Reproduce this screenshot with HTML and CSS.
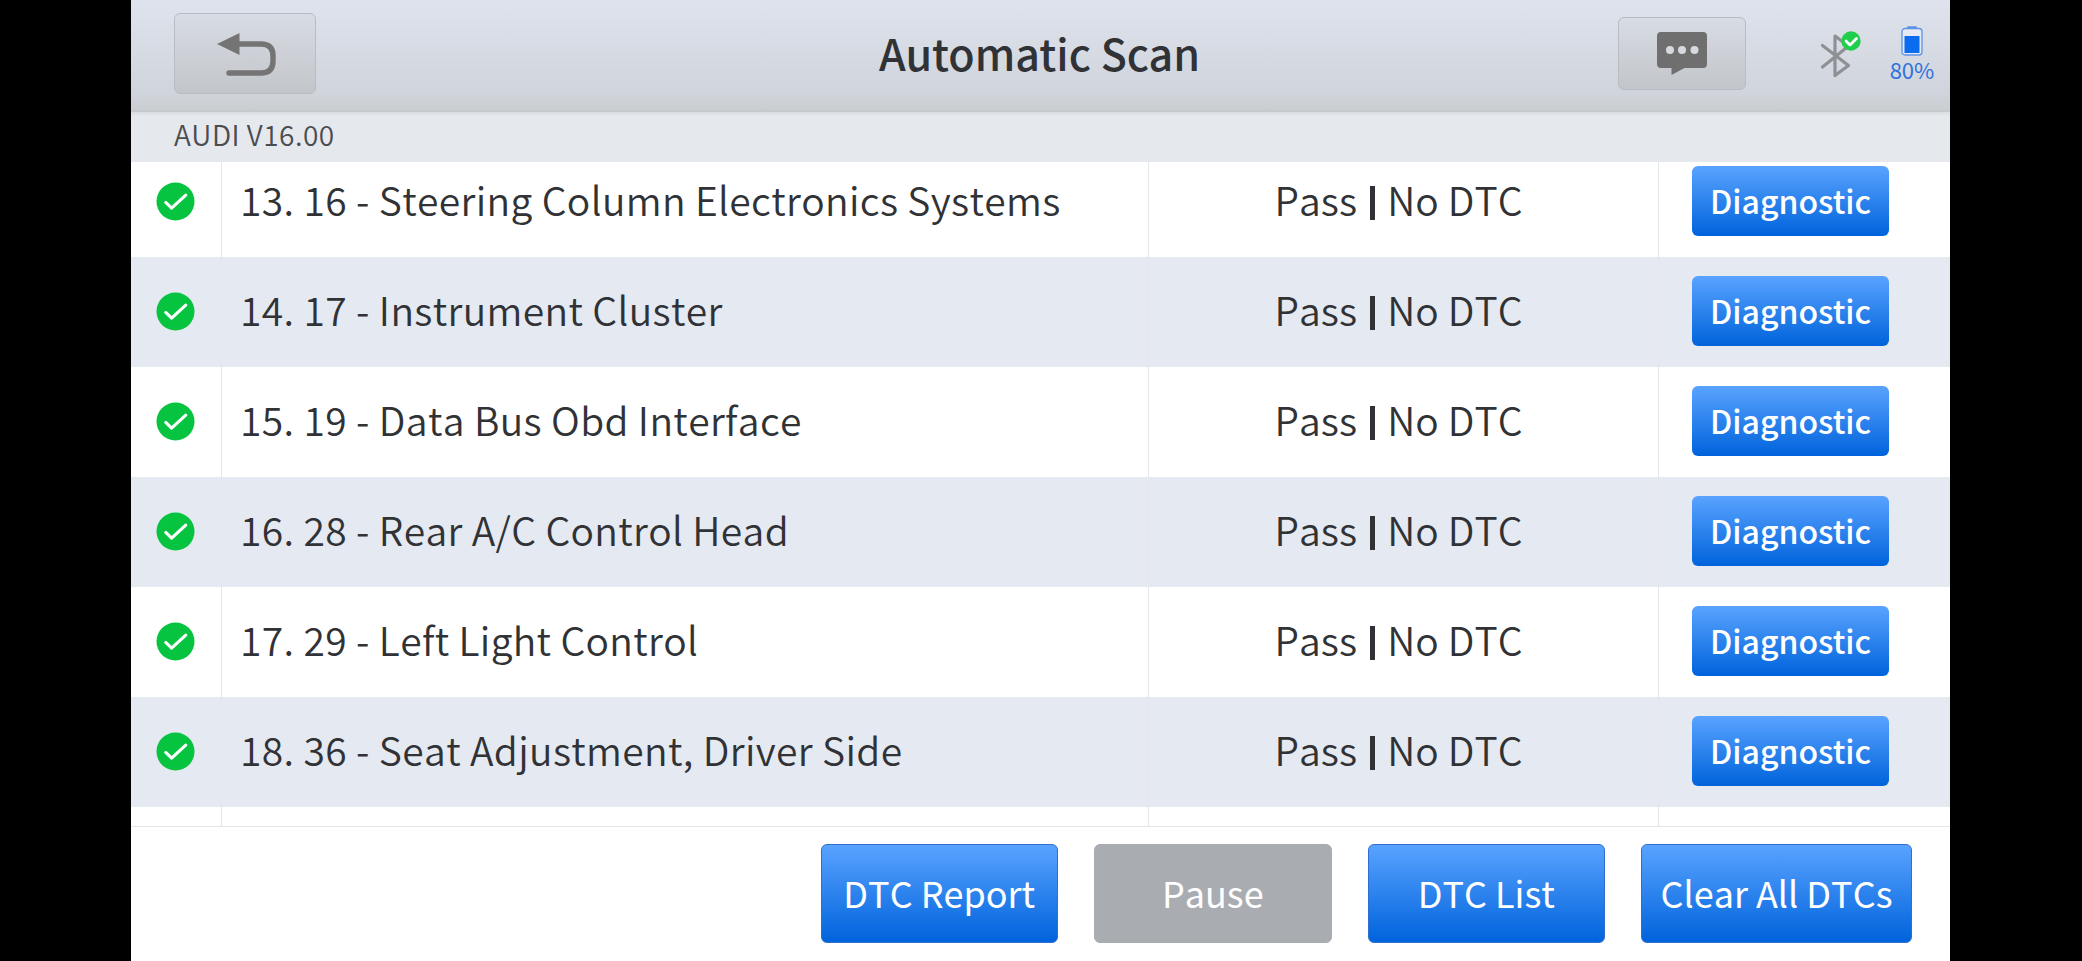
FILE: index.html
```html
<!DOCTYPE html>
<html lang="en">
<head>
    <meta charset="UTF-8">
    <title>Automatic Scan</title>
    <link rel="stylesheet" href="styles.css">
</head>
<body>
    <svg width="0" height="0" class="symbols">
        <symbol id="check" viewBox="0 0 40 40">
            <circle cx="20" cy="20" r="19.5" fill="#06c440"/>
            <path d="M10 21l6 5.800 14.500-13.300" fill="none" stroke="#fff" stroke-width="3.200" stroke-linecap="round" stroke-linejoin="round"/>
        </symbol>
    </svg>

    <div class="app">
        <header class="header">
            <button class="tool-btn back-btn">
                <svg width="62" height="46" viewBox="0 0 62 46">
                    <path d="M2 13L24.500 2v22z" fill="#747474"/>
                    <path d="M22 13h24q12 0 12 12v5q0 12-12 12H14" fill="none" stroke="#747474" stroke-width="5.4" stroke-linecap="round"/>
                </svg>
            </button>
            <h1 class="title">Automatic Scan</h1>
            <div class="tools">
                <button class="tool-btn message-btn">
                    <svg width="50" height="44" viewBox="0 0 50 44">
                        <path d="M4 0h42q4 0 4 4v28q0 4-4 4H27.500L14.500 43V36H4q-4 0-4-4V4q0-4 4-4z" fill="#6f6f6f"/>
                        <circle cx="13" cy="18" r="4" fill="#d6d9de"/>
                        <circle cx="25" cy="18" r="4" fill="#d6d9de"/>
                        <circle cx="37.500" cy="18" r="4" fill="#d6d9de"/>
                    </svg>
                </button>
                <svg class="bluetooth" width="42" height="48" viewBox="0 0 42 48">
                    <path d="M2.500 14.500L28.500 34.500 15 44.500V5L28.500 15 2.500 36" fill="none" stroke="#8f9093" stroke-width="3.200" stroke-linecap="round" stroke-linejoin="round"/>
                    <circle cx="31" cy="10" r="9.700" fill="#1fcf4c"/>
                    <path d="M26 10l4 4 6.500-6.500" fill="none" stroke="#fff" stroke-width="2.800" stroke-linecap="round" stroke-linejoin="round"/>
                </svg>
                <div class="battery">
                    <svg width="22" height="30" viewBox="0 0 22 30">
                        <path d="M7 1.200h8" stroke="#5d93e8" stroke-width="1.800" stroke-linecap="round"/>
                        <rect x="1" y="2.500" width="20" height="26.500" rx="3" fill="#e4e9f2" stroke="#5d93e8" stroke-width="1.300"/>
                        <rect x="3.500" y="10" width="15" height="17" fill="#0a6cee"/>
                    </svg>
                    <span class="battery-level">80%</span>
                </div>
            </div>
        </header>

        <div class="vehicle">AUDI V16.00</div>

        <main class="list">
            <div class="row">
                <div class="status"><svg class="check"><use href="#check"/></svg></div>
                <div class="name">13. 16 - Steering Column Electronics Systems</div>
                <div class="result">Pass<i class="bar"></i>No DTC</div>
                <div class="action"><button class="diag-btn">Diagnostic</button></div>
            </div>
            <div class="row">
                <div class="status"><svg class="check"><use href="#check"/></svg></div>
                <div class="name">14. 17 - Instrument Cluster</div>
                <div class="result">Pass<i class="bar"></i>No DTC</div>
                <div class="action"><button class="diag-btn">Diagnostic</button></div>
            </div>
            <div class="row">
                <div class="status"><svg class="check"><use href="#check"/></svg></div>
                <div class="name">15. 19 - Data Bus Obd Interface</div>
                <div class="result">Pass<i class="bar"></i>No DTC</div>
                <div class="action"><button class="diag-btn">Diagnostic</button></div>
            </div>
            <div class="row">
                <div class="status"><svg class="check"><use href="#check"/></svg></div>
                <div class="name">16. 28 - Rear A/C Control Head</div>
                <div class="result">Pass<i class="bar"></i>No DTC</div>
                <div class="action"><button class="diag-btn">Diagnostic</button></div>
            </div>
            <div class="row">
                <div class="status"><svg class="check"><use href="#check"/></svg></div>
                <div class="name">17. 29 - Left Light Control</div>
                <div class="result">Pass<i class="bar"></i>No DTC</div>
                <div class="action"><button class="diag-btn">Diagnostic</button></div>
            </div>
            <div class="row">
                <div class="status"><svg class="check"><use href="#check"/></svg></div>
                <div class="name">18. 36 - Seat Adjustment, Driver Side</div>
                <div class="result">Pass<i class="bar"></i>No DTC</div>
                <div class="action"><button class="diag-btn">Diagnostic</button></div>
            </div>
            <div class="row">
                <div class="status"></div>
                <div class="name"></div>
                <div class="result"></div>
                <div class="action"></div>
            </div>
        </main>

        <footer class="footer">
            <button class="btn">DTC Report</button>
            <button class="btn disabled">Pause</button>
            <button class="btn">DTC List</button>
            <button class="btn wide">Clear All DTCs</button>
        </footer>
    </div>
</body>
</html>
```
FILE: styles.css
```css
* {
    box-sizing: border-box;
}
body {
    margin: 0;
    background-color: #000;
    color: #303236;
    font-family: "Noto Sans CJK SC", "Noto Sans", sans-serif;
    overflow: hidden;
}
button {
    padding: 0;
    font-family: inherit;
    cursor: pointer;
}
svg {
    display: block;
}
.symbols {
    position: absolute;
}
.app {
    width: 1819px;
    height: 961px;
    margin-left: 131px;
    background-color: #fff;
    display: flex;
    flex-direction: column;
}

/* header */
.header {
    height: 112px;
    padding: 0 15px 0 43px;
    display: grid;
    grid-template-columns: 1fr auto 1fr;
    background: linear-gradient(#dfe3ed, #d0d4dc 82%, #cbcfd3 97%, #c4c8cb);
}
.tool-btn {
    display: flex;
    align-items: center;
    justify-content: center;
    border: 1.5px solid #b9bdc2;
    border-radius: 6px;
    background: linear-gradient(#d8dce4, #c2c5c9);
}
.back-btn {
    width: 142px;
    height: 81px;
    margin-top: 13px;
    padding-left: 2px;
}
.title {
    margin: 0 0 0 -30px;
    font-size: 43px;
    font-weight: 500;
    line-height: 105px;
}
.tools {
    display: flex;
    justify-content: flex-end;
    align-items: flex-start;
}
.message-btn {
    width: 128px;
    height: 73px;
    margin-top: 17px;
}
.bluetooth {
    margin: 31px 0 0 74px;
}
.battery {
    width: 46px;
    margin: 26px 0 0 27px;
    display: flex;
    flex-direction: column;
    align-items: center;
}
.battery-level {
    color: #3072dc;
    font-size: 22px;
    line-height: 27px;
}

.vehicle {
    height: 50px;
    padding-left: 43px;
    background: linear-gradient(#d9dce0, #e5e8ed 4px);
    color: #4a4c50;
    font-size: 28px;
    font-weight: 350;
    font-kerning: none;
    letter-spacing: 0.5px;
    line-height: 44px;
}

/* scan list, scrolled part of a row down */
.list {
    height: 664px;
    overflow: hidden;
}
.row {
    height: 110px;
    display: grid;
    grid-template-columns: 91px 927px 510px 1fr;
    font-size: 39px;
    font-weight: 350;
    font-kerning: none;
}
.row:first-child {
    margin-top: -15px;
}
.row:nth-child(even) {
    background-color: #e5e9f1;
}
.row > div {
    display: flex;
    align-items: center;
    border-right: 1px solid #e4e6e9;
    padding-bottom: 2px;
}
.row > .action {
    border-right: none;
    padding-left: 33px;
}
.row > .status {
    padding-left: 25px;
}
.check {
    width: 39px;
    height: 39px;
}
.row > .name {
    padding: 0 0 7px 18px;
    letter-spacing: 0.36px;
    white-space: nowrap;
}
.row > .result {
    justify-content: center;
    padding: 0 10px 7px 0;
    letter-spacing: 0.1px;
}
.bar {
    width: 5px;
    height: 34px;
    margin: 8px 12px 0 13px;
    background-color: #303236;
}
.diag-btn {
    width: 197px;
    height: 70px;
    padding-bottom: 2px;
    border: none;
    border-radius: 6px;
    background: linear-gradient(#59a3ff, #0063dc);
    color: #fff;
    font-size: 32px;
    font-weight: 500;
}

/* bottom buttons */
.footer {
    flex: 1;
    display: flex;
    justify-content: flex-end;
    gap: 36px;
    padding: 17px 38px 0 0;
    border-top: 1px solid #e4e6e9;
}
.btn {
    width: 237.5px;
    height: 99px;
    padding-bottom: 3px;
    border: 1px solid #2e6fd0;
    border-radius: 6px;
    background: linear-gradient(#59a3ff, #0063dc);
    color: #fff;
    font-size: 36px;
    font-kerning: none;
}
.btn.wide {
    width: 271px;
}
.btn.disabled {
    background: #a9acb1;
    border-color: #a9acb1;
}
```
